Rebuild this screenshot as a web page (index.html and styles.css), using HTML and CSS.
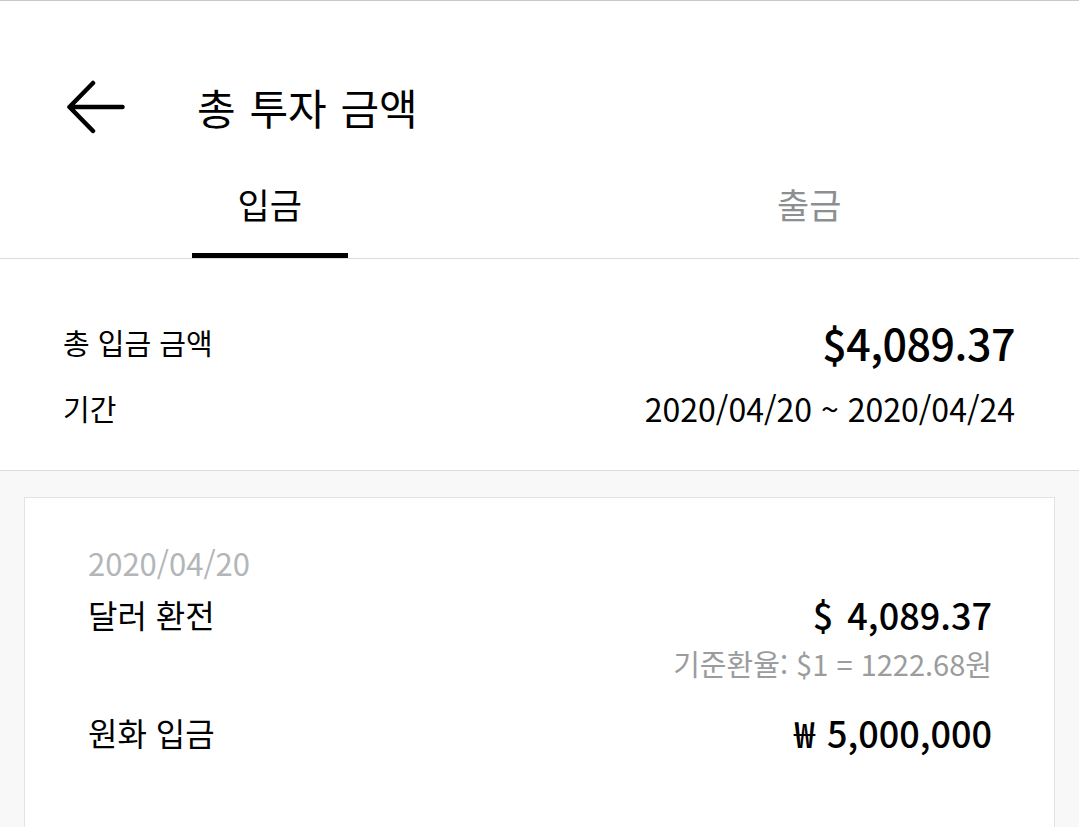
FILE: index.html
```html
<!DOCTYPE html>
<html lang="ko">
<head>
<meta charset="utf-8">
<title>총 투자 금액</title>
<link rel="stylesheet" href="styles.css">
</head>
<body>
<div class="screen">
  <header class="header">
    <svg class="back" width="58" height="54" viewBox="0 0 58 54" aria-hidden="true">
      <path d="M2.5 27 H55.5 M2.5 27 L26 3 M2.5 27 L26 51" fill="none" stroke="#000" stroke-width="4.5" stroke-linecap="round" stroke-linejoin="round"/>
    </svg>
    <h1 class="title">총 투자 금액</h1>
  </header>

  <nav class="tabs">
    <div class="tab active"><span class="tab-label">입금</span><span class="tab-bar"></span></div>
    <div class="tab"><span class="tab-label">출금</span><span class="tab-bar"></span></div>
  </nav>

  <section class="summary">
    <div class="sum-row">
      <span class="sum-label">총 입금 금액</span>
      <span class="sum-total">$4,089.37</span>
    </div>
    <div class="sum-row period">
      <span class="sum-label">기간</span>
      <span class="sum-range">2020/04/20 ~ 2020/04/24</span>
    </div>
  </section>

  <main class="list">
    <article class="card">
      <div class="card-date">2020/04/20</div>
      <div class="tx">
        <span class="tx-label">달러 환전</span>
        <div class="tx-right">
          <span class="tx-amount">$ 4,089.37</span>
          <span class="tx-rate">기준환율: $1 = 1222.68원</span>
        </div>
      </div>
      <div class="tx second">
        <span class="tx-label">원화 입금</span>
        <div class="tx-right">
          <span class="tx-amount">₩ 5,000,000</span>
        </div>
      </div>
    </article>
  </main>
</div>
</body>
</html>
```
FILE: styles.css
```css
* { box-sizing: border-box; }
html, body { margin: 0; padding: 0; }
body {
  background: #fff;
  font-family: "Noto Sans CJK KR", "Noto Sans", sans-serif;
  color: #000;
  width: 1079px;
  height: 827px;
  overflow: hidden;
}
.screen {
  border-top: 1px solid #c9c9c9;
  height: 827px;
  display: flex;
  flex-direction: column;
}

/* header */
.header {
  display: flex;
  align-items: center;
  padding: 79px 0 26px 67px;
}
.back { display: block; flex: none; }
.title {
  margin: 0 0 0 72px;
  font-size: 42px;
  font-weight: 400;
  line-height: 54px;
  word-spacing: 2px;
}

/* tabs */
.tabs {
  display: flex;
  height: 99px;
  border-bottom: 1px solid #dcdcdc;
}
.tab {
  flex: 1;
  display: flex;
  flex-direction: column;
  align-items: center;
  padding-top: 22px;
}
.tab-label {
  font-size: 35px;
  line-height: 44px;
  color: #8c8f92;
}
.tab.active .tab-label { color: #000; }
.tab-bar {
  margin-top: auto;
  width: 156px;
  height: 5px;
  background: transparent;
}
.tab.active .tab-bar { background: #000; }

/* summary */
.summary {
  padding: 57px 64px 42px 63px;
  border-bottom: 1px solid #dcdcdc;
}
.sum-row {
  display: flex;
  justify-content: space-between;
  align-items: center;
  height: 52px;
}
.sum-row.period {
  height: 40px;
  margin-top: 20px;
}
.sum-label {
  font-size: 29px;
  line-height: 40px;
}
.sum-total {
  font-size: 43px;
  font-weight: 500;
  line-height: 52px;
  letter-spacing: -0.5px;
}
.sum-range {
  font-size: 32px;
  line-height: 40px;
}

/* list */
.list {
  flex: 1;
  background: #f8f8f8;
  padding: 26px 24px 0 24px;
}
.card {
  background: #fff;
  border: 1px solid #e4e4e4;
  border-bottom: none;
  height: 100%;
  padding: 47px 62px 0 63px;
}
.card-date {
  font-size: 31px;
  line-height: 36px;
  color: #b3b6b8;
}
.tx {
  display: flex;
  justify-content: space-between;
  align-items: flex-start;
  margin-top: 11px;
}
.tx.second { margin-top: 30px; }
.tx-label {
  font-size: 32px;
  line-height: 44px;
}
.tx-right {
  display: flex;
  flex-direction: column;
  align-items: flex-end;
}
.tx-amount {
  font-size: 36px;
  font-weight: 500;
  line-height: 44px;
  word-spacing: 4px;
}
.tx-rate {
  margin-top: 10px;
  font-size: 29px;
  line-height: 34px;
  color: #9a9c9e;
}
```
